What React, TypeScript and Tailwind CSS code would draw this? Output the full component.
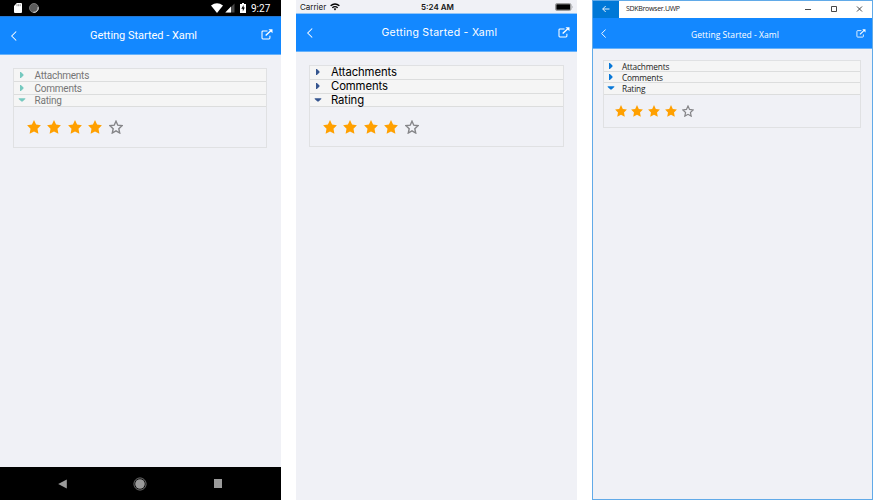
import React from "react";

type IconProps = { className?: string };

const STAR = "M7 .1 9.1 4.6 13.9 5.2 10.5 8.7 11.4 13.8 7 11.4 2.6 13.8 3.5 8.7 .1 5.2 4.9 4.6Z";

function Star({ filled, className }: { filled: boolean; className: string }) {
  return (
    <svg viewBox="0 0 14 14" className={className}>
      {filled ? (
        <path d={STAR} fill="#ffa000" />
      ) : (
        <path d="M7 1.2 8.8 5.2 13 5.7 9.8 8.7 10.7 13 7 10.9 3.3 13 4.2 8.7 1 5.7 5.2 5.2Z" fill="none" stroke="#858588" strokeWidth="1.4" />
      )}
    </svg>
  );
}

function Back({ className }: IconProps) {
  return (
    <svg viewBox="0 0 6 10" className={className} fill="none" stroke="white" strokeWidth="1.05">
      <path d="M5.2.5.7 5l4.5 4.5" />
    </svg>
  );
}

function Share({ className }: IconProps) {
  return (
    <svg viewBox="0 0 12 11" className={className} fill="none" stroke="white">
      <path d="M6.5 2H1.9Q1 2 1 2.9V9Q1 9.9 1.9 9.9H8Q8.9 9.9 8.9 9V6.7" strokeWidth="1.05" />
      <path d="M4.7 6.6 9.8 1.7" strokeWidth="1.4" />
      <path d="M7.5.3h4v4Z" fill="white" stroke="none" />
    </svg>
  );
}

function Arrow({ open, color, className }: { open: boolean; color: string; className: string }) {
  return (
    <svg viewBox="0 0 8 8" className={`h-2 w-2 shrink-0 ${className}`} fill={color}>
      {open ? <path d="M.7 2.3h6.6v.6L4.6 5.4H3.4L.7 2.9Z" /> : <path d="M2 1h.9L5.5 3.5v1L2.9 7H2Z" />}
    </svg>
  );
}

const LABELS = ["Attachments", "Comments", "Rating"];

type AccordionProps = {
  className: string;
  rows: string[];
  rowClass: string;
  labelClass: string;
  arrow: string;
  arrowClass: string;
  starsClass: string;
  starClass: string;
};

function Accordion({ className, rows, rowClass, labelClass, arrow, arrowClass, starsClass, starClass }: AccordionProps) {
  return (
    <div className={`border border-[#e0e1e3] ${className}`}>
      {LABELS.map((label, i) => (
        <div key={label} className={`flex items-center border-b border-[#dcdddd] bg-[#f5f5f5] ${rowClass} ${rows[i]}`}>
          <Arrow open={i === 2} color={arrow} className={arrowClass} />
          <span className={`whitespace-nowrap ${labelClass}`}>{label}</span>
        </div>
      ))}
      <div className={`flex ${starsClass}`}>
        {[1, 2, 3, 4, 5].map((n) => (
          <Star key={n} filled={n < 5} className={`shrink-0 ${starClass}`} />
        ))}
      </div>
    </div>
  );
}

function AndroidScreen() {
  return (
    <section className="flex h-[500px] w-[281px] flex-col bg-[#f0f1f6] font-['Roboto',sans-serif]">
      <div className="flex h-4 shrink-0 items-center bg-black text-white">
        <svg viewBox="0 0 8 10" className="ml-[14px] h-[10px] w-2">
          <path d="M2.8 0H7Q8 0 8 1v8q0 1-1 1H1Q0 10 0 9V3Z" fill="white" />
          <path d="M3 1.2v2M4.6 1.2v2M6.2 1.2v2" stroke="#555" strokeWidth=".6" />
        </svg>
        <svg viewBox="0 0 10 10" className="ml-[7px] h-[10px] w-[10px]">
          <circle cx="5" cy="5" r="4.5" fill="#5b5b5b" stroke="#888" strokeWidth=".8" />
          <path d="M9.1 4.2A4.3 4.3 0 0 1 4.4 9.3" fill="none" stroke="#ddd" strokeWidth="1" />
        </svg>
        <svg viewBox="0 0 12 10" className="ml-[172px] h-[10px] w-3" fill="white">
          <path d="M0 2.4Q6-2 12 2.4L6 10Z" />
        </svg>
        <svg viewBox="0 0 10 10" className="ml-[2px] h-[10px] w-[10px]">
          <path d="M9.5.5v9H.5Z" fill="#494949" />
          <path d="M6 3.5v6H.3Z" fill="white" />
        </svg>
        <svg viewBox="0 0 6 10" className="ml-[5px] h-[10px] w-[6px]">
          <path d="M2 0h2v1h2v9H0V1h2Z" fill="white" />
          <path d="M3.6 2 1.3 5.8h1.5v2.6l2-3.8H3.6Z" fill="black" />
        </svg>
        <span className="ml-[5px] mt-px text-[10px] leading-4">9:27</span>
      </div>
      <header className="flex h-[39px] shrink-0 items-center border-y border-t-[#2476d0] border-b-[#66b2fb] bg-[#1388ff] text-white">
        <Back className="ml-[11px] h-[10px] w-[6px]" />
        <h1 className="ml-[73px] mt-px w-[107px] whitespace-nowrap text-[11px] leading-[16px] tracking-[-0.03px]">Getting Started - Xaml</h1>
        <Share className="ml-[64px] mb-[2px] h-[11px] w-3" />
      </header>
      <main className="grow px-[13px] pt-[13px]">
        <Accordion
          className="h-[80px] w-[254px]"
          rows={["h-[13px]", "h-[13px]", "h-[12px]"]}
          rowClass="pl-[4px]"
          labelClass="ml-[8.6px] mt-px text-[10px] leading-[12px] tracking-[-0.25px] text-[#757575]"
          arrow="#76c9bf"
          arrowClass="mb-px"
          starsClass="gap-[6.4px] pl-[13px] pt-[13px]"
          starClass="h-[14px] w-[14px]"
        />
      </main>
      <footer className="flex h-[33px] shrink-0 items-center bg-black">
        <svg viewBox="0 0 9 10" className="ml-[58px] h-[10px] w-[9px]" fill="#9b9b9b"><path d="M.2 5 8.8.6v8.8Z" /></svg>
        <svg viewBox="0 0 14 14" className="ml-[66px] h-[14px] w-[14px]">
          <circle cx="7" cy="7" r="4.8" fill="#9b9b9b" />
          <circle cx="7" cy="7" r="6.1" fill="none" stroke="#9b9b9b" strokeWidth=".7" />
        </svg>
        <span className="ml-[67px] h-[9px] w-2 bg-[#9b9b9b]" />
      </footer>
    </section>
  );
}

function IosScreen() {
  return (
    <section className="ml-[15px] h-[500px] w-[281px] bg-[#f0f1f6] font-['Inter',sans-serif]">
      <div className="flex h-[13px] items-center text-[#151515]">
        <span className="ml-1 mt-px w-[27px] whitespace-nowrap text-[8px] leading-[13px]">Carrier</span>
        <svg viewBox="0 0 10 8" className="ml-[3px] h-2 w-[10px]" fill="none" stroke="black" strokeWidth="1.4">
          <path d="M.6 2.8Q5-1 9.4 2.8M2.3 4.7Q5 2.6 7.7 4.7" />
          <path d="M3.6 5.8Q5 4.8 6.4 5.8L5 7.4Z" fill="black" stroke="none" />
        </svg>
        <span className="ml-[81px] mt-px w-[34px] whitespace-nowrap text-[8px] font-semibold leading-[13px]">5:24 AM</span>
        <svg viewBox="0 0 18 8" className="ml-[100px] h-2 w-[18px]">
          <rect x=".5" y=".5" width="15.5" height="7" rx="1.4" fill="none" stroke="#777" strokeWidth=".7" />
          <rect x="1.3" y="1.3" width="13.9" height="5.4" rx=".5" fill="black" />
          <path d="M17 2.8q.8 1.2 0 2.4Z" fill="#555" />
        </svg>
      </div>
      <header className="flex h-[39px] items-center border-y border-t-[#94c6f7] border-b-[#66b2fb] bg-[#1388ff] text-white">
        <Back className="ml-[11px] h-[10px] w-[6px]" />
        <h1 className="ml-[68.5px] w-[116px] whitespace-nowrap text-[10.5px] leading-[16px] tracking-[0.27px]">Getting Started - Xaml</h1>
        <Share className="ml-[60px] mb-px h-[11px] w-3" />
      </header>
      <main className="px-[13px] pt-[13px]">
        <Accordion
          className="h-[82px] w-[255px]"
          rows={["h-[14px]", "h-[14px]", "h-[13px]"]}
          rowClass="pl-[4px]"
          labelClass="ml-[9px] text-[11.3px] leading-[13px] tracking-[-0.1px] text-black"
          arrow="#35558f"
          arrowClass="mb-px"
          starsClass="gap-[6.4px] pl-[13px] pt-[13px]"
          starClass="h-[14px] w-[14px]"
        />
      </main>
    </section>
  );
}

function WindowsScreen() {
  return (
    <section className="ml-[15px] h-[500px] w-[281px] border border-[#61aae8] bg-[#f0f1f6] font-['Open_Sans',sans-serif]">
      <div className="flex h-[17px] items-center bg-white">
        <div className="flex h-[17px] w-[26px] items-center justify-center bg-[#0078d7]">
          <svg viewBox="0 0 8 8" className="mb-[2px] h-2 w-2" fill="none" stroke="white" strokeWidth=".9"><path d="M7.5 4H.7M3.7 1 .7 4l3 3" /></svg>
        </div>
        <span className="mb-[2px] ml-[7px] w-[52px] whitespace-nowrap text-[7px] leading-[15px] tracking-[-0.3px] text-[#222]">SDKBrowser.UWP</span>
        <svg viewBox="0 0 60 8" className="mb-[2px] ml-[126px] h-2 w-[60px]" fill="none" stroke="#333" strokeWidth=".9">
          <path d="M1 4.5h6M27.5 1.5h5v5h-5ZM53 1.5l5 5M58 1.5l-5 5" />
        </svg>
      </div>
      <header className="flex h-[31px] items-center border-b border-[#66b2fb] bg-[#1388ff] text-white">
        <Back className="ml-[8px] mt-px h-[9px] w-[5.4px]" />
        <h1 className="ml-[84.6px] mt-[3px] w-[89px] whitespace-nowrap text-[8.5px] leading-[14px] tracking-[0.05px]">Getting Started - Xaml</h1>
        <Share className="ml-[76px] mt-px h-[9px] w-[10px]" />
      </header>
      <main className="pl-[10px] pt-[11px]">
        <Accordion
          className="h-[68px] w-[258px]"
          rows={["h-[11px]", "h-[11px]", "h-[12px]"]}
          rowClass="pl-[3px]"
          labelClass="ml-[7px] text-[8.3px] leading-[11px] tracking-[-0.18px] text-[#222]"
          arrow="#0878d8"
          arrowClass="mb-px"
          starsClass="gap-[4.8px] pl-[10.5px] pt-[10px]"
          starClass="h-[12px] w-[12px]"
        />
      </main>
    </section>
  );
}

export default function App() {
  return (
    <div className="flex h-[500px] w-[875px] overflow-hidden bg-white">
      <AndroidScreen />
      <IosScreen />
      <WindowsScreen />
    </div>
  );
}
